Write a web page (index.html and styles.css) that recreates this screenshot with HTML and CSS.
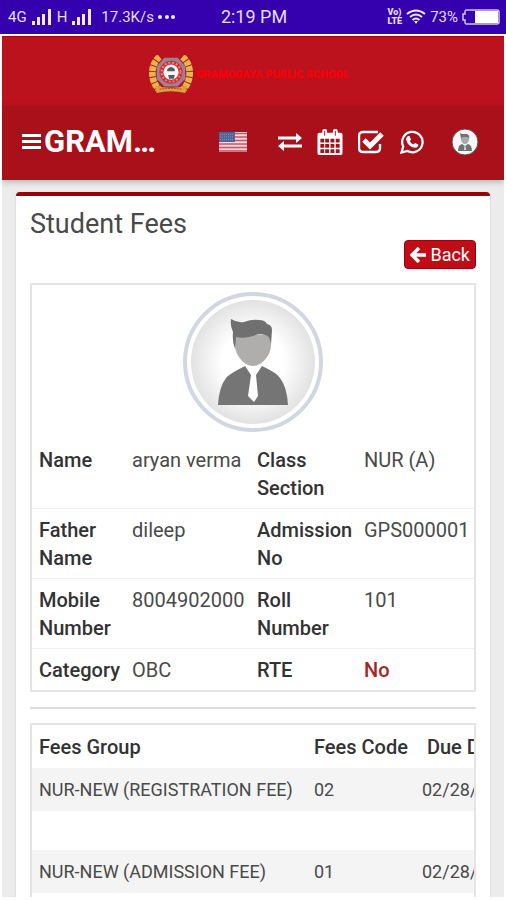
FILE: index.html
```html
<!DOCTYPE html>
<html lang="en">
<head>
  <meta charset="utf-8">
  <meta name="viewport" content="width=device-width, initial-scale=1">
  <title>Student Fees</title>
  <link rel="stylesheet" href="styles.css">
</head>
<body>
  <div class="statusbar">
    <div class="status-left">
      <span>4G</span>
      <svg width="22" height="16" viewBox="0 0 22 16" fill="#eee8ff"><path d="M1 12h3v4H1zM6 8h3v8H6zM11 5h3v11h-3zM17 0h3v16h-3z"/></svg>
      <span>H</span>
      <svg width="22" height="16" viewBox="0 0 22 16" fill="#eee8ff"><path d="M1 12h3v4H1zM6 8h3v8H6zM11 5h3v11h-3zM17 0h3v16h-3z"/></svg>
      <span class="speed">17.3K/s</span>
      <svg width="18" height="16" viewBox="0 0 18 16" fill="#eee8ff"><circle cx="2" cy="8" r="2"/><circle cx="9" cy="8" r="2"/><circle cx="15" cy="8" r="2"/></svg>
    </div>
    <div class="clock">2:19 PM</div>
    <div class="status-right">
      <span class="volte"><span>Vo)</span><span>LTE</span></span>
      <svg width="20" height="16" viewBox="0 0 20 16" fill="none" stroke="#eee8ff" stroke-width="2"><path d="M1 5q9-7 18 0M4 8q6-5 12 0M6.500 11q3.500-3 7 0"/><path d="M8 12h4l-2 3z" fill="#eee8ff" stroke="none"/></svg>
      <span>73%</span>
      <svg width="38" height="16" viewBox="0 0 38 16"><path d="M4 1h31a2 2 0 0 1 2 2v10a2 2 0 0 1-2 2H4q-1 0-1-2v-2H1V5h2V3q0-2 1-2z" fill="none" stroke="#cfc6ee" stroke-width="1.500"/><path d="M13 2h23v12H13z" fill="#fff"/></svg>
    </div>
  </div>

  <div class="app">
    <div class="brand">
      <svg class="crest" width="44" height="40" viewBox="0 0 46 42">
        <g fill="none" stroke="#e6b64c" stroke-width="7" stroke-dasharray="5 1">
          <path d="M11 2C1 10 1 26 10 36"/><path d="M35 2c10 8 10 24 1 34"/>
        </g>
        <path d="M6 32q17 5 34 0l-2 8q-15-4-30 0z" fill="#dca040"/>
        <path d="M11 36q12-2 24 0" fill="none" stroke="#a33a22" stroke-dasharray="2 1"/>
        <path d="M16 3h14l8 9v13l-8 8H16l-8-8V12z" fill="#9c8296"/>
        <circle cx="23" cy="18" r="12" fill="#d32a30"/>
        <circle cx="23" cy="18" r="10" fill="none" stroke="#e98a88" stroke-width="2" stroke-dasharray="2 2"/>
        <circle cx="23" cy="18" r="8" fill="#f5f7f7"/>
        <path d="M19 15q4-5 8 0v2h-8zM20 21h7l-1 4h-5z" fill="#515b60"/>
      </svg>
      <span class="school">GRAMODAYA PUBLIC SCHOOL</span>
    </div>

    <nav class="navbar">
      <button class="menu" aria-label="Menu">
        <svg width="19" height="18" viewBox="0 0 19 18" fill="#fff"><path d="M0 1h19v3H0zM0 7h19v3H0zM0 13h19v3H0z"/></svg>
      </button>
      <div class="title">GRAMODAYA PUBLIC SCHOOL</div>
      <div class="nav-icons">
        <a href="#" class="flag" aria-label="Language">
          <svg width="28" height="20" viewBox="0 0 28 20"><path fill="#f3d9dc" d="M0 0h28v20H0z"/><path d="M0 1.500h28M0 5h28M0 8.500h28M0 12h28M0 15.500h28M0 19h28" stroke="#cb5264" stroke-width="1.600"/><path fill="#53649b" d="M0 0h16v10H0z"/><path d="M1 2.500h14M1 5h14M1 7.500h14" stroke="#8290b8" stroke-dasharray="1 1"/></svg>
        </a>
        <a href="#" class="exchange" aria-label="Switch">
          <svg width="24" height="18" viewBox="0 0 24 18" fill="#fff"><path d="M0 3.500h18V0l6 5-6 5V6.500H0zM24 11.500H6V8l-6 5 6 5v-3.500h18z"/></svg>
        </a>
        <a href="#" aria-label="Calendar">
          <svg width="26" height="26" viewBox="0 0 26 27"><path fill="#fff" fill-rule="evenodd" d="M2 4h3V2q0-2 2-2h1q2 0 2 2v2h6V2q0-2 2-2h1q2 0 2 2v2h3q2 0 2 2v19q0 2-2 2H2q-2 0-2-2V6q0-2 2-2zM7 2v5h1V2zM18 2v5h1V2zM3 10v4h4v-4zM8 10v4h4v-4zM13.500 10v4h4v-4zM19 10v4h4v-4zM3 15.500v4h4v-4zM8 15.500v4h4v-4zM13.500 15.500v4h4v-4zM19 15.500v4h4v-4zM3 21v4h4v-4zM8 21v4h4v-4zM13.500 21v4h4v-4zM19 21v4h4v-4z"/></svg>
        </a>
        <a href="#" aria-label="Tasks">
          <svg width="27" height="24" viewBox="0 0 27 24" fill="none" stroke="#fff"><path d="M20 2H5Q1 2 1 6v12q0 4 4 4h13q4 0 4-4v-4" stroke-width="2.400"/><path d="M6 10l6 6L24 4" stroke-width="5"/></svg>
        </a>
        <a href="#" aria-label="WhatsApp">
          <svg width="24" height="24" viewBox="0 0 24 24"><path d="M1.500 22.500l1.700-6A10.200 10.200 0 1 1 7.500 21z" fill="none" stroke="#fff" stroke-width="2.300"/><path fill="#fff" d="M8 6h1.500l1.500 3.500-1.200 1.700q1.200 2.300 3.700 3.300l1.500-1.600 3.300 1.600q.2 3-3.300 3.300Q8 17 6 9.500 6 7 8 6z"/></svg>
        </a>
        <a href="#" class="user" aria-label="Profile">
          <svg width="28" height="28" viewBox="0 0 28 28"><circle cx="14" cy="14" r="13" fill="#f7f7f7" stroke="#68474b" stroke-width="1"/><path fill="#aaa" d="M10 8h8v4q-1 4-4 4t-4-4z"/><path fill="#6c7474" d="M9 5l2 1h5q3 1 2 5l-1-2h-6l-1 2zM7 23q0-6 4-7l3 2 3-2q4 1 4 7z"/><path fill="#ddd" d="M13.500 18h1l.5 4h-2z"/></svg>
        </a>
      </div>
    </nav>

    <main class="content">
      <section class="box">
        <h1>Student Fees</h1>
        <div class="tools">
          <button class="btn-back">
            <svg width="16" height="16" viewBox="0 0 16 16" fill="none" stroke="#fff" stroke-width="3.500"><path d="M9 1L2 8l7 7M3 8h13"/></svg>
            Back
          </button>
        </div>

        <div class="profile">
          <svg class="avatar" width="142" height="142" viewBox="0 0 142 142">
            <defs>
              <radialGradient id="shade"><stop offset="0.500" stop-color="#fff"/><stop offset="1" stop-color="#e2e2e2"/></radialGradient>
            </defs>
            <circle cx="71" cy="71" r="68" fill="#fff" stroke="#d2d6e0" stroke-width="4"/>
            <circle cx="71" cy="71" r="62" fill="url(#shade)"/>
            <path fill="#b0adad" d="M53 44h36v10c0 10-9 21-18 21S53 64 53 54z"/>
            <path fill="#707070" d="M49 28q6 4 13 3 8-3 15-2 6 0 8 4 5 1 5 6l-1 15q-1-10-6-10-5-2-12 1-9 3-17 1l-1 12q-3-8-2-17-3-6-2-13z"/>
            <path fill="#757575" d="M36 114q1-18 8-27 3-4 19-12l8 5 9-5q15 7 18 12 7 9 8 27z"/>
            <path fill="#fff" d="M63 75l8 4 9-4-6 9 2 21-4 6-6-6 3-21z"/>
          </svg>
          <table class="info">
            <tr><th>Name</th><td>aryan verma</td><th>Class Section</th><td>NUR (A)</td></tr>
            <tr><th>Father Name</th><td>dileep</td><th>Admission No</th><td>GPS000001</td></tr>
            <tr><th>Mobile Number</th><td>8004902000</td><th>Roll Number</th><td>101</td></tr>
            <tr><th>Category</th><td>OBC</td><th>RTE</th><td class="red">No</td></tr>
          </table>
        </div>

        <hr>

        <div class="table-wrap">
          <table class="fees">
            <thead>
              <tr><th>Fees Group</th><th>Fees Code</th><th class="due">Due Date</th></tr>
            </thead>
            <tbody>
              <tr><td>NUR-NEW (REGISTRATION FEE)</td><td>02</td><td class="due">02/28/2019</td></tr>
              <tr class="gap"><td></td><td></td><td></td></tr>
              <tr><td>NUR-NEW (ADMISSION FEE)</td><td>01</td><td class="due">02/28/2019</td></tr>
              <tr class="gap"><td></td><td></td><td></td></tr>
            </tbody>
          </table>
        </div>
      </section>
    </main>
  </div>
</body>
</html>
```

FILE: styles.css
```css
* {
  box-sizing: border-box;
}

body {
  margin: 0;
  height: 100vh;
  display: flex;
  flex-direction: column;
  overflow: hidden;
  background: #fff;
  font-family: Roboto, sans-serif;
  font-size: 20px;
  line-height: 28px;
  color: #4a4a4a;
}

svg {
  display: block;
  flex: none;
}

button {
  font: inherit;
  border: 0;
  cursor: pointer;
}

/* phone status bar */
.statusbar {
  display: grid;
  grid-template-columns: 1fr auto 1fr;
  align-items: center;
  flex: none;
  height: 34px;
  padding: 0 6px 0 8px;
  background: #3500ae;
  color: #e6defa;
  font-size: 15px;
}

.status-left,
.status-right {
  display: flex;
  align-items: center;
  gap: 4px;
}

.status-right {
  justify-content: flex-end;
}

.speed {
  margin-left: 4px;
}

.clock {
  font-size: 18px;
}

.volte {
  display: flex;
  flex-direction: column;
  font-size: 9px;
  line-height: 9px;
  font-weight: 900;
}

.app {
  flex: 1;
  min-height: 0;
  display: flex;
  flex-direction: column;
  margin: 2px 2px 3px;
  background: #ececec;
  overflow: hidden;
}

.brand {
  flex: none;
  display: flex;
  align-items: center;
  justify-content: center;
  gap: 3px;
  height: 70px;
  padding: 6px 8px 0 0;
  border-top: 1px solid #a80008;
  background: #bc121d;
}

.school {
  color: #f80008;
  font-size: 11px;
  font-weight: 900;
}

.navbar {
  flex: none;
  display: flex;
  align-items: center;
  height: 74px;
  padding: 0 25px 2px 20px;
  background: #a9101a;
  box-shadow: 0 2px 6px rgba(0, 0, 0, 0.25);
}

.menu {
  padding: 0;
  background: none;
}

.title {
  width: 120px;
  margin-left: 3px;
  overflow: hidden;
  white-space: nowrap;
  text-overflow: ellipsis;
  color: #fff;
  font-size: 31px;
  line-height: 36px;
  font-weight: bold;
}

.nav-icons {
  flex: 1;
  display: flex;
  align-items: center;
  justify-content: flex-end;
  gap: 15px;
}

.exchange {
  margin-left: 16px;
}

.user {
  margin-left: 12px;
}

.content {
  flex: 1;
  min-height: 0;
  padding: 12px 14px 0;
}

.box {
  min-height: 100%;
  padding: 12px 14px;
  border-top: 4px solid #98000a;
  border-radius: 4px;
  background: #fff;
  box-shadow: 0 1px 2px rgba(0, 0, 0, 0.2);
}

h1 {
  margin: 0;
  font-size: 27px;
  line-height: 32px;
  font-weight: normal;
}

.tools {
  display: flex;
  justify-content: flex-end;
}

.btn-back {
  display: flex;
  align-items: center;
  gap: 4px;
  height: 29px;
  padding: 0 5px;
  border: 1px solid #9f000c;
  border-radius: 4px;
  background: #bf0d17;
  color: #fff;
  font-size: 18px;
}

.profile {
  margin-top: 14px;
  padding-top: 6px;
  border: 2px solid #e4e4e4;
}

.avatar {
  margin: 0 auto 6px;
}

table {
  border-collapse: collapse;
}

th {
  text-align: left;
  font-weight: 500;
  color: #333;
}

.info {
  width: 100%;
  table-layout: fixed;
}

.info th,
.info td {
  padding: 7px 0 6px 7px;
  vertical-align: top;
  border-bottom: 1px solid #f1f1f1;
}

.info th:nth-child(1) {
  width: 93px;
}

.info td:nth-child(2) {
  width: 125px;
}

.info th:nth-child(3) {
  width: 107px;
}

.info tr:last-child > * {
  border-bottom: 0;
}

.info .red {
  color: #a92525;
  font-weight: 500;
}

hr {
  margin: 15px 0 14px;
  border: 0;
  border-top: 2px solid #ddd;
}

.table-wrap {
  overflow: hidden;
  border: 2px solid #e4e4e4;
}

.fees {
  width: 520px;
  table-layout: fixed;
}

.fees th,
.fees td {
  height: 43px;
  padding: 0 7px;
  white-space: nowrap;
}

.fees td {
  font-size: 18px;
}

.fees th:nth-child(1) {
  width: 275px;
}

.fees th:nth-child(2) {
  width: 108px;
}

.fees tbody tr {
  background: #f4f4f4;
}

.fees tbody .gap {
  background: #fff;
}

.fees .gap td {
  height: 39px;
}

.fees .due {
  padding-right: 40px;
  text-align: right;
}

.fees th.due {
  padding-right: 44px;
}
```
